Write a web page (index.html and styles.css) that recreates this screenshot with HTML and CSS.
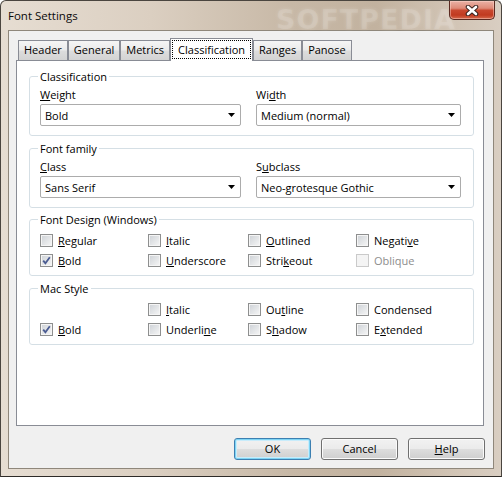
FILE: index.html
```html
<!DOCTYPE html>
<html>
<head>
<meta charset="utf-8">
<title>Font Settings</title>
<link rel="stylesheet" href="styles.css">
</head>
<body>
<div class="window">
  <div class="titlebar">
    <span class="title">Font Settings</span>
    <span class="wm-title">SOFTPEDIA</span>
    <div class="close">
      <svg width="16" height="11" viewBox="0 0 16 11">
        <path d="M4 2 L12 9 M12 2 L4 9" stroke="#3a2420" stroke-width="4.6" stroke-linecap="round"/>
        <path d="M4 2 L12 9 M12 2 L4 9" stroke="#ffffff" stroke-width="2.6" stroke-linecap="round"/>
      </svg>
    </div>
  </div>
  <div class="client">
    <div class="tabs">
      <div class="tab">Header</div>
      <div class="tab">General</div>
      <div class="tab">Metrics</div>
      <div class="tab active"><span class="focus">Classification</span></div>
      <div class="tab">Ranges</div>
      <div class="tab">Panose</div>
    </div>
    <div class="panel">
      <fieldset class="group">
        <legend>Classification</legend>
        <div class="fields">
          <div class="field">
            <div class="lbl"><u>W</u>eight</div>
            <div class="combo"><span>Bold</span><svg class="arrow" width="7" height="4" viewBox="0 0 7 4"><polygon points="0,0 7,0 3.5,4" fill="#000"/></svg></div>
          </div>
          <div class="field">
            <div class="lbl">Wi<u>d</u>th</div>
            <div class="combo"><span>Medium (normal)</span><svg class="arrow" width="7" height="4" viewBox="0 0 7 4"><polygon points="0,0 7,0 3.5,4" fill="#000"/></svg></div>
          </div>
        </div>
      </fieldset>

      <fieldset class="group">
        <legend>Font family</legend>
        <div class="fields">
          <div class="field">
            <div class="lbl"><u>C</u>lass</div>
            <div class="combo"><span>Sans Serif</span><svg class="arrow" width="7" height="4" viewBox="0 0 7 4"><polygon points="0,0 7,0 3.5,4" fill="#000"/></svg></div>
          </div>
          <div class="field">
            <div class="lbl">S<u>u</u>bclass</div>
            <div class="combo"><span>Neo-grotesque Gothic</span><svg class="arrow" width="7" height="4" viewBox="0 0 7 4"><polygon points="0,0 7,0 3.5,4" fill="#000"/></svg></div>
          </div>
        </div>
      </fieldset>

      <fieldset class="group tight">
        <legend>Font Design (Windows)</legend>
        <div class="checks">
          <label class="cb"><span class="box"></span><span><u>R</u>egular</span></label>
          <label class="cb"><span class="box"></span><span><u>I</u>talic</span></label>
          <label class="cb"><span class="box"></span><span><u>O</u>utlined</span></label>
          <label class="cb"><span class="box"></span><span>Negati<u>v</u>e</span></label>
          <label class="cb"><span class="box"><svg width="11" height="11" viewBox="0 0 11 11"><path d="M2.2 5.6 L4.4 8.2 L8.8 2.2" fill="none" stroke="#4b5c92" stroke-width="1.8"/></svg></span><span><u>B</u>old</span></label>
          <label class="cb"><span class="box"></span><span><u>U</u>nderscore</span></label>
          <label class="cb"><span class="box"></span><span>Stri<u>k</u>eout</span></label>
          <label class="cb disabled"><span class="box"></span><span>Oblique</span></label>
        </div>
      </fieldset>

      <fieldset class="group">
        <legend>Mac Style</legend>
        <div class="checks">
          <span></span>
          <label class="cb"><span class="box"></span><span><u>I</u>talic</span></label>
          <label class="cb"><span class="box"></span><span>Ou<u>t</u>line</span></label>
          <label class="cb"><span class="box"></span><span>Condensed</span></label>
          <label class="cb"><span class="box"><svg width="11" height="11" viewBox="0 0 11 11"><path d="M2.2 5.6 L4.4 8.2 L8.8 2.2" fill="none" stroke="#4b5c92" stroke-width="1.8"/></svg></span><span><u>B</u>old</span></label>
          <label class="cb"><span class="box"></span><span>Underli<u>n</u>e</span></label>
          <label class="cb"><span class="box"></span><span>S<u>h</u>adow</span></label>
          <label class="cb"><span class="box"></span><span>E<u>x</u>tended</span></label>
        </div>
      </fieldset>
    </div>
    <div class="buttons">
      <button class="btn default">OK</button>
      <button class="btn">Cancel</button>
      <button class="btn"><u>H</u>elp</button>
    </div>
  </div>
</div>
</body>
</html>
```

FILE: styles.css
```css
html, body {
  margin: 0;
  padding: 0;
  background: #ffffff;
}

body {
  font-family: "Open Sans", "Noto Sans", sans-serif;
  font-size: 11px;
  color: #000;
}

.window {
  width: 502px;
  height: 477px;
  box-sizing: border-box;
  border: 1px solid #4a453f;
  border-bottom-color: #2e2b28;
  border-radius: 6px 6px 0 0;
  background: linear-gradient(to right, #e6ddd2 0%, #dbcfc1 30%, #c7b8a6 58%, #c2b29f 75%, #d3c6b7 92%, #d9cec2 100%);
  padding: 0 7px 7px;
  display: flex;
  flex-direction: column;
  position: relative;
  overflow: hidden;
}

.titlebar {
  height: 29px;
  display: flex;
  align-items: flex-start;
  position: relative;
  flex: none;
}

.title {
  margin-top: 7px;
  line-height: 15px;
  font-size: 11.5px;
  color: #0a0a0a;
  position: relative;
  z-index: 1;
}

.wm-title {
  position: absolute;
  left: 268px;
  top: 3px;
  font-family: "DejaVu Sans", sans-serif;
  font-weight: bold;
  font-size: 27px;
  letter-spacing: 1px;
  color: rgba(255, 255, 255, 0.13);
  text-shadow: 0 0 4px rgba(255, 255, 255, 0.18);
  pointer-events: none;
}

.close {
  margin-left: auto;
  margin-right: -1px;
  width: 46px;
  height: 19px;
  box-sizing: border-box;
  border: 1px solid #5b2a21;
  border-top: none;
  border-radius: 0 0 5px 5px;
  background: linear-gradient(#eab2a6 0%, #de8a78 40%, #c9482f 52%, #c13a20 78%, #d66a4d 100%);
  box-shadow: inset 0 0 0 1px rgba(255, 220, 210, 0.45);
  display: flex;
  align-items: center;
  justify-content: center;
  position: relative;
  z-index: 1;
}

.client {
  flex: 1;
  border: 1px solid #8f877b;
  background: #f0f0f0;
  padding: 7px 8px 0 7px;
  display: flex;
  flex-direction: column;
}

.tabs {
  display: flex;
  align-items: flex-end;
  height: 23px;
  margin-left: 2px;
  margin-bottom: -1px;
  position: relative;
  z-index: 1;
}

.tab {
  height: 20px;
  box-sizing: border-box;
  border: 1px solid #898c95;
  border-bottom: none;
  padding: 0 5px;
  line-height: 18px;
  margin-bottom: 1px;
  background: linear-gradient(#f5f5f5 0%, #ebebeb 45%, #dcdcdc 55%, #d3d3d3 100%);
  white-space: nowrap;
}

.tab.active {
  height: 23px;
  margin-bottom: 0;
  background: #ffffff;
  padding: 1px 1px 0;
}

.focus {
  display: block;
  border: 1px dotted #000;
  padding: 0 5px;
  line-height: 17px;
}

.panel {
  width: 468px;
  height: 366px;
  box-sizing: border-box;
  border: 1px solid #898c95;
  background: #ffffff;
  padding: 8px 9px 0 12px;
  position: relative;
}

.group {
  width: 445px;
  box-sizing: border-box;
  margin: 0;
  border: 1px solid #d5dfe5;
  border-radius: 3px;
  padding: 3px 12px 9px 10px;
  min-inline-size: 0;
  position: relative;
}

.group + .group {
  margin-top: 5px;
}

.group + .group.tight {
  margin-top: 4px;
}

.group legend {
  padding: 0 2px;
  margin-left: -2px;
  line-height: 15px;
}

.fields {
  display: grid;
  grid-template-columns: 201px 205px;
  column-gap: 15px;
}

.lbl {
  line-height: 15px;
}

.combo {
  margin-top: 2px;
  height: 22px;
  box-sizing: border-box;
  border: 1px solid #acacac;
  border-radius: 2px;
  background: #ffffff;
  display: flex;
  align-items: center;
  justify-content: space-between;
  padding: 0 5px 0 4px;
}

.arrow {
  display: block;
  flex: none;
}

.checks {
  display: grid;
  grid-template-columns: 108px 100px 108px 1fr;
  grid-auto-rows: 20px;
  margin-bottom: -4px;
}

.cb {
  display: flex;
  align-items: center;
  gap: 5px;
  white-space: nowrap;
}

.box {
  width: 13px;
  height: 13px;
  box-sizing: border-box;
  border: 1px solid #8e8f8f;
  background: linear-gradient(135deg, #cdd1d6 0%, #e4e6e8 55%, #f7f7f7 100%);
  box-shadow: inset 0 0 0 1px #f5f5f5;
  flex: none;
  display: flex;
  align-items: center;
  justify-content: center;
}

.box svg {
  display: block;
}

.cb.disabled {
  color: #8d8d8d;
}

.cb.disabled .box {
  border-color: #cacaca;
  background: #f4f4f4;
  box-shadow: none;
}

.buttons {
  display: flex;
  justify-content: flex-end;
  gap: 10px;
  margin-top: 12px;
}

.btn {
  width: 77px;
  height: 22px;
  box-sizing: border-box;
  border: 1px solid #707070;
  border-radius: 3px;
  background: linear-gradient(#f2f2f2 0%, #ebebeb 48%, #dddddd 52%, #cfcfcf 100%);
  box-shadow: inset 0 0 0 1px #fbfbfb;
  font-family: inherit;
  font-size: 11px;
  color: #000;
  padding: 0;
  line-height: 18px;
}

.btn.default {
  border-color: #3c7fb1;
  box-shadow: inset 0 0 0 1px #7ed4f4, inset 0 0 0 2px #c8ecfb;
}
```
